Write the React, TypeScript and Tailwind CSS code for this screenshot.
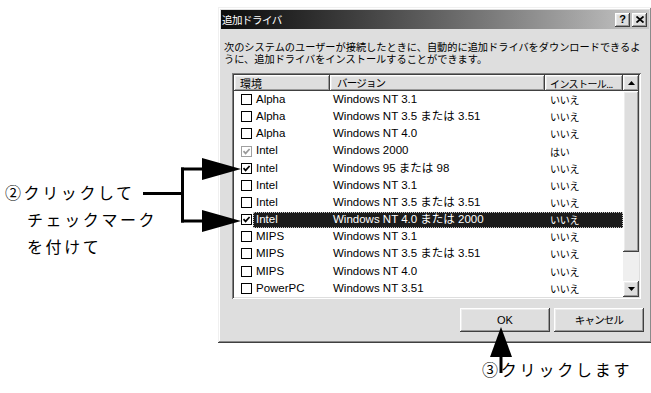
type CheckState = 'off' | 'on' | 'grey';

interface DriverRow {
  env: string;
  ver: string;
  inst: string;
  check: CheckState;
  selected?: boolean;
}

const rows: DriverRow[] = [
  { env: 'Alpha', ver: 'Windows NT 3.1', inst: 'いいえ', check: 'off' },
  { env: 'Alpha', ver: 'Windows NT 3.5 または 3.51', inst: 'いいえ', check: 'off' },
  { env: 'Alpha', ver: 'Windows NT 4.0', inst: 'いいえ', check: 'off' },
  { env: 'Intel', ver: 'Windows 2000', inst: 'はい', check: 'grey' },
  { env: 'Intel', ver: 'Windows 95 または 98', inst: 'いいえ', check: 'on' },
  { env: 'Intel', ver: 'Windows NT 3.1', inst: 'いいえ', check: 'off' },
  { env: 'Intel', ver: 'Windows NT 3.5 または 3.51', inst: 'いいえ', check: 'off' },
  { env: 'Intel', ver: 'Windows NT 4.0 または 2000', inst: 'いいえ', check: 'on', selected: true },
  { env: 'MIPS', ver: 'Windows NT 3.1', inst: 'いいえ', check: 'off' },
  { env: 'MIPS', ver: 'Windows NT 3.5 または 3.51', inst: 'いいえ', check: 'off' },
  { env: 'MIPS', ver: 'Windows NT 4.0', inst: 'いいえ', check: 'off' },
  { env: 'PowerPC', ver: 'Windows NT 3.51', inst: 'いいえ', check: 'off' },
];

const raised =
  'bg-[#dedede] shadow-[inset_-1px_-1px_#404040,inset_1px_1px_#ffffff,inset_-2px_-2px_#9a9a9a,inset_2px_2px_#ececec]';

const ui = { fontFamily: '"Liberation Sans", "Noto Sans CJK JP", sans-serif' };
const jp = { fontFamily: '"Noto Sans CJK JP", sans-serif' };

function Checkbox({ state }: { state: CheckState }) {
  const grey = state === 'grey';
  return (
    <div
      className={`flex h-[11px] w-[11px] items-center justify-center border bg-white ${
        grey ? 'border-[#a0a0a0]' : 'border-black'
      }`}
    >
      {state !== 'off' && (
        <svg width="9" height="9" viewBox="0 0 9 9">
          <path
            d="M1.5 4.2 L3.6 6.4 L7.6 2"
            fill="none"
            stroke={grey ? '#9a9a9a' : '#000'}
            strokeWidth="1.7"
          />
        </svg>
      )}
    </div>
  );
}

function Arrow({ down }: { down?: boolean }) {
  return (
    <div className={`flex h-[16px] w-[16px] items-center justify-center ${raised}`}>
      <svg width="7" height="4" viewBox="0 0 7 4">
        <path d={down ? 'M0 0 H7 L3.5 4 Z' : 'M0 4 H7 L3.5 0 Z'} fill="#000" />
      </svg>
    </div>
  );
}

export default function App() {
  return (
    <div className="relative h-[393px] w-[651px] overflow-hidden bg-white">
      {/* dialog */}
      <div
        className="ml-[218px] mt-[7px] flex h-[336px] w-[434px] flex-col bg-[#dedede] p-[3px] shadow-[inset_-1px_-1px_#404040,inset_1px_1px_#f0f0f0,inset_-2px_-2px_#8a8a8a,inset_2px_2px_#ffffff]"
        style={ui}
      >
        <div className="flex h-[19px] items-center justify-between bg-gradient-to-r from-[#0c0c0c] to-[#c8c8c8] pl-[1px] pr-[2px]">
          <span className="text-[10.5px] tracking-[-0.5px] text-white" style={jp}>
            追加ドライバ
          </span>
          <div className="flex gap-[2px]">
            <div className={`flex h-[14px] w-[15px] items-center justify-center text-[11px] font-bold leading-none ${raised}`}>
              ?
            </div>
            <div className={`flex h-[14px] w-[15px] items-center justify-center ${raised}`}>
              <svg width="8" height="7" viewBox="0 0 8 7">
                <path d="M0.5 0.5 L7.5 6.5 M7.5 0.5 L0.5 6.5" stroke="#000" strokeWidth="1.8" />
              </svg>
            </div>
          </div>
        </div>

        <div className="flex flex-1 flex-col pt-[12px]">
          <div className="pl-[3px] text-[10.2px] text-black" style={jp}>
            <div className="h-[12px] leading-[12px]">
              次のシステムのユーザーが接続したときに、自動的に追加ドライバをダウンロードできるよ
            </div>
            <div className="h-[12px] leading-[12px]">うに、追加ドライバをインストールすることができます。</div>
          </div>

          <div className="ml-[11px] mt-[8px] h-[226px] w-[409px] bg-white p-[2px] shadow-[inset_1px_1px_#808080,inset_-1px_-1px_#ffffff,inset_2px_2px_#404040,inset_-2px_-2px_#dedede]">
            <div className="flex h-full">
              <div className="flex w-[389px] flex-col">
                <div className="flex h-[16px] text-black" style={jp}>
                  <div className={`flex w-[96px] items-center pl-[6px] text-[11px] ${raised}`}>環境</div>
                  <div className={`flex w-[215px] items-center pl-[7px] text-[10.5px] tracking-[-0.8px] ${raised}`}>
                    バージョン
                  </div>
                  <div className={`flex w-[78px] items-center pl-[5px] text-[10px] tracking-[-0.6px] ${raised}`}>
                    インストール...
                  </div>
                </div>
                {rows.map((r, i) => (
                  <div key={i} className="flex h-[17.17px] items-center">
                    <div className="flex w-[19px] items-center pl-[7px]">
                      <Checkbox state={r.check} />
                    </div>
                    <div
                      className={`flex h-[16px] flex-1 items-center text-[11.5px] ${
                        r.selected
                          ? 'bg-[#1c1c1c] text-white outline-1 -outline-offset-1 outline-dotted outline-[#c8c8c8]'
                          : 'text-black'
                      }`}
                    >
                      <span className="w-[77px] pl-[3px]">{r.env}</span>
                      <span className="w-[215px] pl-[3px]">{r.ver}</span>
                      <span className="pl-[5px] text-[10px] tracking-[-0.3px]" style={jp}>
                        {r.inst}
                      </span>
                    </div>
                  </div>
                ))}
              </div>
              <div className="flex w-[16px] flex-col">
                <Arrow />
                <div className={`h-[161px] ${raised}`} />
                <div className="flex-1 bg-[#efefef]" />
                <Arrow down />
              </div>
            </div>
          </div>

          <div className="mt-[9px] flex justify-end gap-[4px] pr-[5px]">
            <div className={`flex h-[24px] w-[90px] items-center justify-center text-[11px] text-black ${raised}`}>
              OK
            </div>
            <div
              className={`flex h-[24px] w-[90px] items-center justify-center text-[10.5px] tracking-[-0.8px] text-black ${raised}`}
              style={jp}
            >
              キャンセル
            </div>
          </div>
        </div>
      </div>

      {/* annotations */}
      <div
        className="absolute left-[5px] top-[179px] text-[16px] leading-[27px] tracking-[2.6px] text-black"
        style={jp}
      >
        <div>②クリックして</div>
        <div className="pl-[22px]">チェックマーク</div>
        <div className="pl-[22px]">を付けて</div>
      </div>
      <div
        className="absolute left-[482px] top-[356px] text-[16px] leading-[27px] tracking-[2.8px] text-black"
        style={jp}
      >
        ③クリックします
      </div>

      <svg className="pointer-events-none absolute left-0 top-0" width="651" height="393" viewBox="0 0 651 393">
        <g stroke="#000" strokeWidth="3" fill="none">
          <path d="M143 193.5 H183" />
          <path d="M182.5 167.5 V222.5" />
          <path d="M181 169 H205" />
          <path d="M181 221 H205" />
          <path d="M501 354 V373" />
        </g>
        <g fill="#000">
          <polygon points="202,158 241,169 202,180" />
          <polygon points="202,210 241,221 202,232" />
          <polygon points="490,357 501,327 512,357" />
        </g>
      </svg>
    </div>
  );
}
